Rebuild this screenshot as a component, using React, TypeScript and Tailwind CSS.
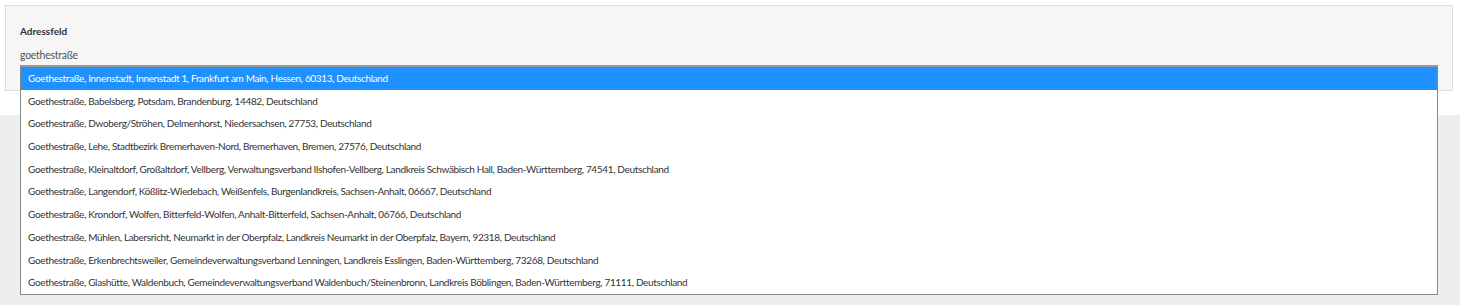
import { useState } from "react";

const results = [
  "Goethestraße, Innenstadt, Innenstadt 1, Frankfurt am Main, Hessen, 60313, Deutschland",
  "Goethestraße, Babelsberg, Potsdam, Brandenburg, 14482, Deutschland",
  "Goethestraße, Dwoberg/Ströhen, Delmenhorst, Niedersachsen, 27753, Deutschland",
  "Goethestraße, Lehe, Stadtbezirk Bremerhaven-Nord, Bremerhaven, Bremen, 27576, Deutschland",
  "Goethestraße, Kleinaltdorf, Großaltdorf, Vellberg, Verwaltungsverband Ilshofen-Vellberg, Landkreis Schwäbisch Hall, Baden-Württemberg, 74541, Deutschland",
  "Goethestraße, Langendorf, Kößlitz-Wiedebach, Weißenfels, Burgenlandkreis, Sachsen-Anhalt, 06667, Deutschland",
  "Goethestraße, Krondorf, Wolfen, Bitterfeld-Wolfen, Anhalt-Bitterfeld, Sachsen-Anhalt, 06766, Deutschland",
  "Goethestraße, Mühlen, Labersricht, Neumarkt in der Oberpfalz, Landkreis Neumarkt in der Oberpfalz, Bayern, 92318, Deutschland",
  "Goethestraße, Erkenbrechtsweiler, Gemeindeverwaltungsverband Lenningen, Landkreis Esslingen, Baden-Württemberg, 73268, Deutschland",
  "Goethestraße, Glashütte, Waldenbuch, Gemeindeverwaltungsverband Waldenbuch/Steinenbronn, Landkreis Böblingen, Baden-Württemberg, 71111, Deutschland",
];

export default function App() {
  const [query, setQuery] = useState("goethestraße");
  const [active, setActive] = useState(0);

  return (
    <div className="min-h-[305px] bg-[#eeeeee] font-['Lato',sans-serif]">
      <div className="h-[115px] bg-white pt-[5px] pl-[5px]">
        <div className="relative h-[86px] w-[1448px] border border-[#dddddd] bg-[#f6f6f6] px-[14px] pt-[18px]">
          <label className="block text-[10px] font-bold leading-[14px] text-[#333333]">
            Adressfeld
          </label>
          <input
            value={query}
            onChange={(e) => setQuery(e.target.value)}
            autoFocus
            className="mt-[7px] block h-[20px] w-[1417px] bg-transparent p-0 text-[10.5px] leading-[20px] tracking-[-0.25px] text-[#555555] caret-[#333333] outline-none"
          />

          {/* suggestion list */}
          <ul className="absolute left-[14px] top-[59px] z-10 w-[1418px] border-x border-b border-t-2 border-[#888888] border-t-[#999999] bg-white">
            {results.map((r, i) => (
              <li
                key={r}
                onMouseEnter={() => setActive(i)}
                className={`h-[22.7px] cursor-pointer truncate pl-[7px] text-[10px] leading-[22.7px] tracking-[-0.34px] ${
                  i === active ? "bg-[#1e90ff] text-white" : "text-[#333333]"
                }`}
              >
                {r}
              </li>
            ))}
          </ul>
        </div>
      </div>
    </div>
  );
}
